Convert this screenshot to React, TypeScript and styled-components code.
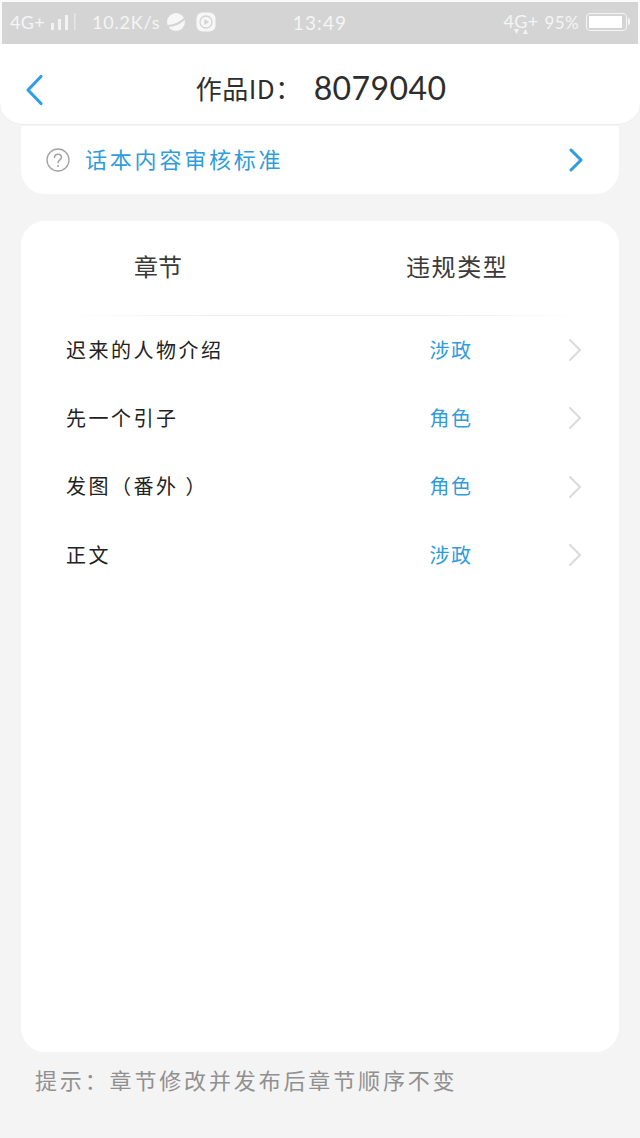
import React from "react";
import styled, { createGlobalStyle } from "styled-components";

const CJK = `"Noto Sans CJK SC", "Noto Sans", sans-serif`;

const GlobalStyle = createGlobalStyle`
  html, body {
    margin: 0;
    padding: 0;
    background: #f4f4f4;
  }
  * {
    box-sizing: border-box;
  }
`;

const rows = [
  { title: "迟来的人物介绍", type: "涉政" },
  { title: "先一个引子", type: "角色" },
  { title: "发图（番外 ）", type: "角色" },
  { title: "正文", type: "涉政" },
];

const ChevronRight = ({ color, width = 3 }: { color: string; width?: number }) => (
  <svg width="14" height="24" viewBox="0 0 14 24" fill="none">
    <path d="M2 2l10 10L2 22" stroke={color} strokeWidth={width} strokeLinecap="round" strokeLinejoin="round" />
  </svg>
);

const App = () => {
  return (
    <Page>
      <GlobalStyle />
      <StatusBar>
        <StatusLeft>
          <Network>4G+</Network>
          <svg width="26" height="20" viewBox="0 0 26 20" fill="#f3f3f3">
            <rect x="0" y="11" width="3" height="7" />
            <rect x="7" y="7" width="3" height="11" />
            <rect x="14" y="3" width="3" height="15" />
            <rect x="23" y="1" width="1.5" height="17" opacity="0.5" />
          </svg>
          <Speed>10.2K/s</Speed>
          <svg width="20" height="20" viewBox="0 0 20 20">
            <circle cx="10" cy="10" r="9" fill="#f7f7f7" />
            <path d="M1 13c6 0 13-3 18-8l1 2c-5 5-12 8-18 8z" fill="#d4d4d4" />
          </svg>
          <PlayIcon width="20" height="20" viewBox="0 0 20 20">
            <rect x="0.5" y="0.5" width="19" height="19" rx="6" fill="#f7f7f7" />
            <circle cx="10" cy="10" r="6" fill="none" stroke="#d4d4d4" strokeWidth="1.3" />
            <path d="M8.300 7l5 3-5 3z" fill="#d4d4d4" />
          </PlayIcon>
        </StatusLeft>
        <Clock>13:49</Clock>
        <StatusRight>
          <NetworkStack>
            <Network>4G+</Network>
            <svg width="16" height="6" viewBox="0 0 16 6" fill="#f3f3f3">
              <path d="M1 0h5L3.500 5zM10 5h5l-2.500-5z" />
            </svg>
          </NetworkStack>
          <Battery>95%</Battery>
          <BatteryShell>
            <BatteryLevel />
          </BatteryShell>
        </StatusRight>
      </StatusBar>

      <Header>
        <BackButton>
          <svg width="20" height="32" viewBox="0 0 20 32" fill="none">
            <path d="M17 2.500L4 16l13 13.500" stroke="#2f9fe8" strokeWidth="3.200" strokeLinecap="round" strokeLinejoin="round" />
          </svg>
        </BackButton>
        <Title>
          <TitleLabel>作品ID：</TitleLabel>
          <TitleId>8079040</TitleId>
        </Title>
      </Header>

      <Content>
        <NoticeCard>
          <svg width="24" height="24" viewBox="0 0 24 24" fill="none">
            <circle cx="12" cy="12" r="11" stroke="#a2a2a2" strokeWidth="1.300" />
            <path d="M8.500 9.500c0-2 1.500-3.300 3.500-3.300s3.500 1.300 3.500 3.100c0 2.600-3.500 2.700-3.500 5.400" stroke="#a2a2a2" strokeWidth="1.500" strokeLinecap="round" />
            <circle cx="12" cy="18" r="1" fill="#a2a2a2" />
          </svg>
          <NoticeText>话本内容审核标准</NoticeText>
          <NoticeArrow>
            <ChevronRight color="#2f9cdc" />
          </NoticeArrow>
        </NoticeCard>

        <MainCard>
          <TableHead>
            <HeadCell>章节</HeadCell>
            <HeadCell $wide>违规类型</HeadCell>
          </TableHead>
          <Divider />
          {rows.map((row, i) => (
            <Row key={i}>
              <ChapterName>{row.title}</ChapterName>
              <ViolationType>{row.type}</ViolationType>
              <ChevronRight color="#dcdcdc" width={2.2} />
            </Row>
          ))}
        </MainCard>

        <Hint>提示：章节修改并发布后章节顺序不变</Hint>
      </Content>
    </Page>
  );
};

const Page = styled.div`
  width: 640px;
  height: 1138px;
  overflow: hidden;
  background: #f4f4f4;
  display: flex;
  flex-direction: column;
`;

const StatusBar = styled.div`
  height: 44px;
  flex: none;
  border-top: 2px solid #fafafa;
  border-left: 2px solid #fafafa;
  border-right: 2px solid #fafafa;
  background: #d4d4d4;
  color: #f5f5f5;
  font-family: "Lato", "Open Sans", sans-serif;
  display: grid;
  grid-template-columns: 1fr auto 1fr;
  align-items: center;
  padding: 0 8px 2px;
`;

const StatusLeft = styled.div`
  display: flex;
  align-items: center;
  gap: 6px;
`;

const StatusRight = styled.div`
  display: flex;
  align-items: center;
  justify-content: flex-end;
`;

const Network = styled.span`
  font-size: 18px;
  line-height: 18px;
  letter-spacing: 0.3px;
`;

const NetworkStack = styled.div`
  display: flex;
  flex-direction: column;
  align-items: center;
  margin-top: 2px;

  svg {
    margin-top: -1px;
  }
`;

const Speed = styled.span`
  font-size: 18px;
  letter-spacing: 0.8px;
  margin-left: 9px;
`;

const PlayIcon = styled.svg`
  margin-left: 4px;
`;

const Clock = styled.span`
  font-size: 19px;
  letter-spacing: 1.1px;
`;

const Battery = styled.span`
  font-size: 17px;
  letter-spacing: 0.4px;
  margin-left: 6px;
`;

const BatteryShell = styled.div`
  width: 41px;
  height: 18px;
  margin-left: 7px;
  margin-right: 3px;
  padding: 2px;
  border: 1.5px solid #f5f5f5;
  border-radius: 4px;
  position: relative;

  &::after {
    content: "";
    position: absolute;
    right: -4px;
    top: 4px;
    width: 2px;
    height: 7px;
    background: #f5f5f5;
    border-radius: 0 2px 2px 0;
  }
`;

const BatteryLevel = styled.div`
  width: 95%;
  height: 100%;
  background: #fff;
  border-radius: 1px;
`;

const Header = styled.div`
  height: 80px;
  flex: none;
  background: #fff;
  border-radius: 0 0 22px 22px;
  display: flex;
  align-items: center;
  justify-content: center;
  position: relative;
  z-index: 1;
  box-shadow: 0 1px 1px rgba(0, 0, 0, 0.03);
`;

const BackButton = styled.div`
  position: absolute;
  left: 24px;
  top: 30px;
  line-height: 0;
`;

const Title = styled.div`
  display: flex;
  align-items: center;
  color: #2d2d2d;
  margin-left: 2px;
  margin-top: 6px;
`;

const TitleLabel = styled.span`
  font-family: ${CJK};
  font-size: 26px;
  letter-spacing: 0.5px;
  width: 118px;
  white-space: nowrap;
`;

const TitleId = styled.span`
  font-family: "Lato", "Open Sans", sans-serif;
  font-size: 32px;
  letter-spacing: 0.4px;
`;

const Content = styled.div`
  flex: 1;
  padding: 2px 21px 0;
  display: flex;
  flex-direction: column;
`;

const NoticeCard = styled.div`
  height: 68px;
  flex: none;
  background: #fff;
  border-radius: 0 0 24px 24px;
  display: flex;
  align-items: center;
  padding: 0 36px 0 25px;
`;

const NoticeText = styled.span`
  font-family: ${CJK};
  font-size: 22px;
  letter-spacing: 2.800px;
  color: #2f9cdc;
  margin-left: 15px;
  padding-bottom: 4px;
`;

const NoticeArrow = styled.span`
  margin-left: auto;
  line-height: 0;
`;

const MainCard = styled.div`
  height: 831px;
  flex: none;
  margin-top: 27px;
  background: #fff;
  border-radius: 24px;
  padding: 0 39px 0 45px;
`;

const TableHead = styled.div`
  height: 94px;
  display: grid;
  grid-template-columns: 300px 1fr;
  align-items: center;
  padding-bottom: 6px;
`;

const HeadCell = styled.div<{ $wide?: boolean }>`
  font-family: ${CJK};
  font-size: 24px;
  letter-spacing: ${(p) => (p.$wide ? "1.600px" : "0")};
  color: #3a3a3a;
  padding-left: ${(p) => (p.$wide ? "0" : "68px")};
  margin-left: ${(p) => (p.$wide ? "40px" : "0")};
  white-space: nowrap;
`;

const Divider = styled.div`
  height: 1px;
  margin: 0 -6px 0 0;
  background: linear-gradient(to right, #fff, #ececec 30%, #ececec 70%, #fff);
`;

const Row = styled.div`
  height: 68.3px;
  display: grid;
  grid-template-columns: 1fr 100px 14px;
  align-items: center;
  column-gap: 65px;

  svg {
    display: block;
    margin-left: 2px;
  }
`;

const ChapterName = styled.span`
  font-family: ${CJK};
  font-size: 20px;
  letter-spacing: 2.500px;
  color: #222;
  white-space: nowrap;
  padding-bottom: 2px;
`;

const ViolationType = styled.span`
  font-family: ${CJK};
  font-size: 20px;
  letter-spacing: 1.500px;
  color: #2f9cdc;
  text-align: center;
  padding-bottom: 2px;
`;

const Hint = styled.div`
  font-family: ${CJK};
  font-size: 22px;
  letter-spacing: 2.850px;
  color: #909090;
  margin: 11px 0 0 14px;
  white-space: nowrap;
`;

export default App;
